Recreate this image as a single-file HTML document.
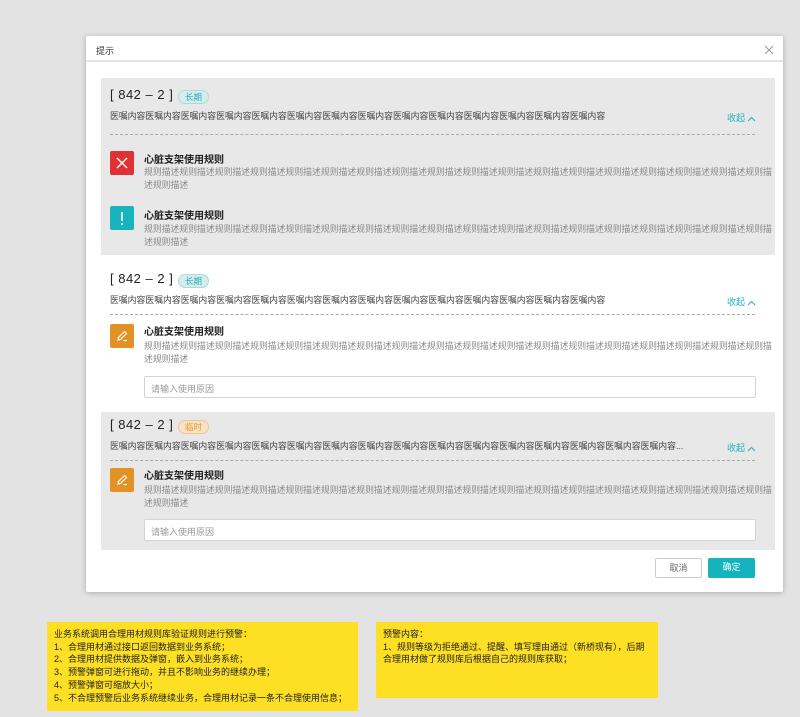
<!DOCTYPE html>
<html><head><meta charset="utf-8"><style>
*{margin:0;padding:0;box-sizing:border-box}
body{width:800px;height:717px;background:#e3e3e3;font-family:"Liberation Sans","Noto Sans CJK SC",sans-serif;position:relative;overflow:hidden;color:#333}
.a{position:absolute;white-space:nowrap}
.modal{position:absolute;left:86px;top:36px;width:697px;height:556px;background:#fff;box-shadow:0 1px 6px rgba(0,0,0,.25);border-radius:2px}
.hd{position:absolute;left:0;top:0;width:697px;height:26px;border-bottom:2px solid #e6e6e6;font-size:9px;padding:8px 0 0 10px}
.gray{position:absolute;left:15px;width:674px;background:#e8e8e8}
.title{font-size:13px;color:#222;letter-spacing:.5px}
.tag{position:absolute;height:14px;border-radius:7px;font-size:8.5px;line-height:12px;text-align:center;width:31px}
.tl{background:#d8ecec;border:1px solid #a9dcdc;color:#1fb0b8}
.tt{background:#f6e3c6;border:1px solid #efc88a;color:#e79a2c}
.ct{font-size:8.85px;color:#444}
.fold{font-size:9px;color:#1fb3bd}
.fold svg{vertical-align:middle;margin-left:2px}
.dash{position:absolute;left:110px;width:645px;border-top:1px dashed #aaa}
.icon{position:absolute;left:110px;width:24px;height:24px;border-radius:2px}
.rt{font-size:10px;font-weight:bold;color:#222}
.rd{position:absolute;left:144px;width:632px;font-size:8.85px;line-height:13px;color:#888;white-space:normal;word-break:break-all}
.inp{position:absolute;left:144px;width:612px;height:22px;background:#fff;border:1px solid #d4d4d4;border-radius:2px;font-size:9px;color:#999;padding:5px 0 0 6px}
.btn{position:absolute;top:558px;width:47px;height:20px;border-radius:2px;font-size:9px;text-align:center;line-height:19px}
.y{position:absolute;background:#fddf24;font-size:9px;line-height:12.7px;color:#222;padding:6px 0 0 7px}
</style></head><body>
<div class="modal"><div class="hd">提示</div>
<svg class="a" style="left:678px;top:9px" width="10" height="10"><path d="M1 1L9 9M9 1L1 9" stroke="#999" stroke-width="1"/></svg>
</div>
<div class="gray" style="left:101px;top:78px;height:177px"></div>
<div class="gray" style="left:101px;top:412px;height:138px"></div>

<!-- section 1 -->
<div class="a title" style="left:110px;top:87px">[ 842 – 2 ]</div>
<div class="tag tl" style="left:178px;top:90px">长期</div>
<div class="a ct" style="left:110px;top:109px">医嘱内容医嘱内容医嘱内容医嘱内容医嘱内容医嘱内容医嘱内容医嘱内容医嘱内容医嘱内容医嘱内容医嘱内容医嘱内容医嘱内容</div>
<div class="a fold" style="left:727px;top:111px">收起<svg width="9" height="6"><path d="M1 5L4.5 1.5L8 5" stroke="#1fb3bd" fill="none" stroke-width="1"/></svg></div>
<div class="dash" style="top:134px"></div>
<div class="icon" style="top:151px;background:#e03134"><svg width="24" height="24"><path d="M7 7L17 17M17 7L7 17" stroke="#fff" stroke-width="1.4"/></svg></div>
<div class="a rt" style="left:144px;top:151px">心脏支架使用规则</div>
<div class="rd" style="top:166px">规则描述规则描述规则描述规则描述规则描述规则描述规则描述规则描述规则描述规则描述规则描述规则描述规则描述规则描述规则描述规则描述规则描述规则描述规则描述</div>
<div class="icon" style="top:206px;background:#18b4bd"><svg width="24" height="24"><path d="M12 6V15M12 17V19" stroke="#fff" stroke-width="1.6"/></svg></div>
<div class="a rt" style="left:144px;top:207px">心脏支架使用规则</div>
<div class="rd" style="top:223px">规则描述规则描述规则描述规则描述规则描述规则描述规则描述规则描述规则描述规则描述规则描述规则描述规则描述规则描述规则描述规则描述规则描述规则描述规则描述</div>

<!-- section 2 -->
<div class="a title" style="left:110px;top:271px">[ 842 – 2 ]</div>
<div class="tag tl" style="left:178px;top:274px">长期</div>
<div class="a ct" style="left:110px;top:293px">医嘱内容医嘱内容医嘱内容医嘱内容医嘱内容医嘱内容医嘱内容医嘱内容医嘱内容医嘱内容医嘱内容医嘱内容医嘱内容医嘱内容</div>
<div class="a fold" style="left:727px;top:295px">收起<svg width="9" height="6"><path d="M1 5L4.5 1.5L8 5" stroke="#1fb3bd" fill="none" stroke-width="1"/></svg></div>
<div class="dash" style="top:314px"></div>
<div class="icon" style="top:324px;background:#e29124"><svg width="24" height="24"><path d="M8 16L8.5 13.5L14.5 7.5L16.5 9.5L10.5 15.5Z M13.5 16.5H17" stroke="#fff" stroke-width="1.2" fill="none"/></svg></div>
<div class="a rt" style="left:144px;top:323px">心脏支架使用规则</div>
<div class="rd" style="top:340px">规则描述规则描述规则描述规则描述规则描述规则描述规则描述规则描述规则描述规则描述规则描述规则描述规则描述规则描述规则描述规则描述规则描述规则描述规则描述</div>
<div class="inp" style="top:376px">请输入使用原因</div>

<!-- section 3 -->
<div class="a title" style="left:110px;top:417px">[ 842 – 2 ]</div>
<div class="tag tt" style="left:178px;top:420px">临时</div>
<div class="a ct" style="left:110px;top:439px">医嘱内容医嘱内容医嘱内容医嘱内容医嘱内容医嘱内容医嘱内容医嘱内容医嘱内容医嘱内容医嘱内容医嘱内容医嘱内容医嘱内容医嘱内容医嘱内容...</div>
<div class="a fold" style="left:727px;top:441px">收起<svg width="9" height="6"><path d="M1 5L4.5 1.5L8 5" stroke="#1fb3bd" fill="none" stroke-width="1"/></svg></div>
<div class="dash" style="top:460px"></div>
<div class="icon" style="top:468px;background:#e29124"><svg width="24" height="24"><path d="M8 16L8.5 13.5L14.5 7.5L16.5 9.5L10.5 15.5Z M13.5 16.5H17" stroke="#fff" stroke-width="1.2" fill="none"/></svg></div>
<div class="a rt" style="left:144px;top:467px">心脏支架使用规则</div>
<div class="rd" style="top:484px">规则描述规则描述规则描述规则描述规则描述规则描述规则描述规则描述规则描述规则描述规则描述规则描述规则描述规则描述规则描述规则描述规则描述规则描述规则描述</div>
<div class="inp" style="top:519px">请输入使用原因</div>

<div class="btn" style="left:655px;border:1px solid #ccc;background:#fff;color:#666">取消</div>
<div class="btn" style="left:708px;background:#15b4bd;color:#fff">确定</div>

<div class="y" style="left:47px;top:622px;width:311px;height:89px">业务系统调用合理用材规则库验证规则进行预警：<br>1、合理用材通过接口返回数据到业务系统；<br>2、合理用材提供数据及弹窗，嵌入到业务系统；<br>3、预警弹窗可进行拖动，并且不影响业务的继续办理；<br>4、预警弹窗可缩放大小；<br>5、不合理预警后业务系统继续业务，合理用材记录一条不合理使用信息；</div>
<div class="y" style="left:376px;top:622px;width:282px;height:76px">预警内容：<br>1、规则等级为拒绝通过、提醒、填写理由通过（新桥现有），后期<br>合理用材做了规则库后根据自己的规则库获取；</div>
</body></html>
